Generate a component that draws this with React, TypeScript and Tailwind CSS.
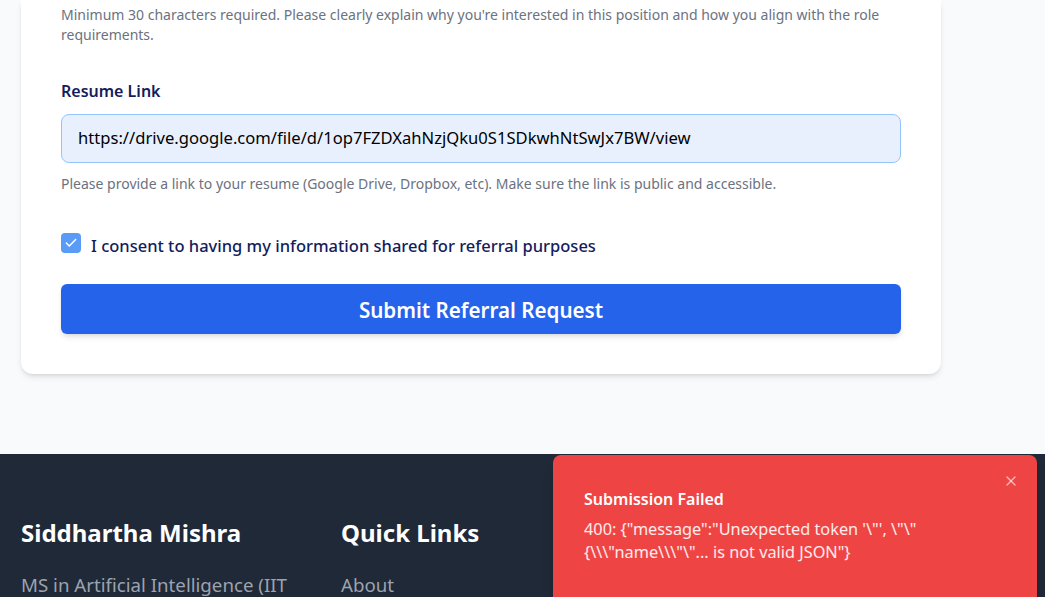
import React from "react";
import { X, Check } from "lucide-react";

const navy = "text-[#141c5c]";

const App: React.FC = () => {
  return (
    <div
      className="min-h-[597px] bg-[#f8fafc] overflow-hidden relative"
      style={{ fontFamily: '"Noto Sans", "Open Sans", sans-serif' }}
    >
      {/* Form card */}
      <div className="pb-20">
        <div className="ml-[21px] w-[920px] bg-white rounded-b-xl shadow-md px-10 pt-[5px] pb-10">
          <p className="text-sm leading-5 text-[#6b7280]">
            Minimum 30 characters required. Please clearly explain why you're
            interested in this position and how you align with the role
            requirements.
          </p>

          <div className="mt-[34px]">
            <label className={`block text-base font-semibold ${navy} leading-6`}>
              Resume Link
            </label>
            <div className="mt-[11px] h-[49px] w-full rounded-lg border border-[#93c5fd] bg-[#e8f0fe] px-4 flex items-center text-[16.6px] text-black">
              https://drive.google.com/file/d/1op7FZDXahNzjQku0S1SDkwhNtSwJx7BW/view
            </div>
            <p className="mt-[11px] text-sm leading-5 text-[#6b7280]">
              Please provide a link to your resume (Google Drive, Dropbox, etc).
              Make sure the link is public and accessible.
            </p>
          </div>

          <div className="mt-[38px] flex items-start gap-[10px]">
            <span className="mt-[1px] w-5 h-5 rounded bg-[#5b9bf8] flex items-center justify-center">
              <Check className="w-[14px] h-[14px] text-white" strokeWidth={2.5} />
            </span>
            <span className={`text-[16.5px] font-medium leading-6 mt-[2px] ${navy}`}>
              I consent to having my information shared for referral purposes
            </span>
          </div>

          <button className="mt-[26px] w-full h-[50px] rounded-md bg-[#2563eb] text-white text-[20.6px] font-semibold shadow-md pt-[3px]">
            Submit Referral Request
          </button>
        </div>
      </div>

      {/* Footer */}
      <footer className="bg-[#1f2937] h-[200px] px-[21px] pt-[63px]">
        <div className="flex">
          <div className="w-[320px]">
            <h3 className="text-2xl font-bold text-white leading-8">
              Siddhartha Mishra
            </h3>
            <p className="mt-[22px] text-[18.7px] text-[#9ca3af] leading-7">
              MS in Artificial Intelligence (IIT
            </p>
          </div>
          <div>
            <h3 className="text-2xl font-bold text-white leading-8">
              Quick Links
            </h3>
            <p className="mt-[22px] text-[18.7px] text-[#9ca3af] leading-7">About</p>
          </div>
        </div>
      </footer>

      {/* Toast */}
      <div className="absolute left-[553px] top-[455px] w-[484px] h-[160px] rounded-lg bg-[#ef4444] shadow-lg pl-[31px] pr-10 pt-[32px]">
        <button className="absolute right-[18px] top-[18px] text-white/60">
          <X className="w-4 h-4" strokeWidth={2} />
        </button>
        <div className="text-base font-semibold text-white leading-6">
          Submission Failed
        </div>
        <div className="mt-[7px] text-[16.3px] text-white/90 leading-[23px]">
          400: {'{"message":"Unexpected token \'\\"\', \\"\\"{\\\\\\"name\\\\\\"\\"... is not valid JSON"}'}
        </div>
      </div>
    </div>
  );
};

export default App;
